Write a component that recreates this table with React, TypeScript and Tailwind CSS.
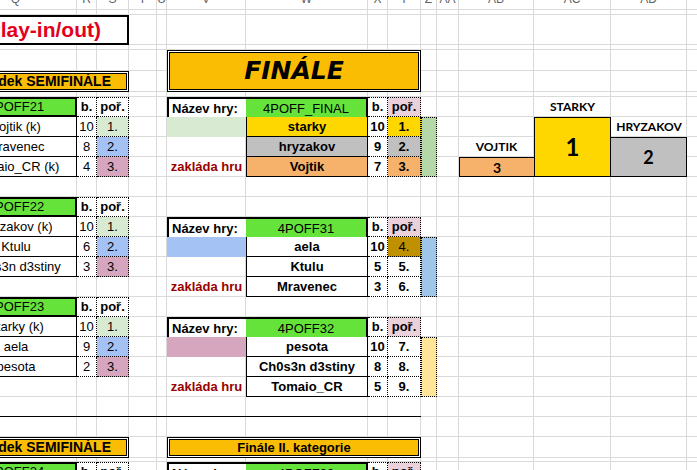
import { Fragment } from "react";

type LRow = { name: string; pts: string; rank: string; bg: string };
type RRow = { name: string; pts: string; rank: string; nameBg: string; rankBg: string; rankBold?: boolean };

const letters = ["Q", "R", "S", "T", "U", "V", "W", "X", "Y", "Z", "AA", "AB", "AC", "AD", "AE"];
const ROWS = 30;

function LeftTable({ pos, code, rows }: { pos: string; code: string; rows: LRow[] }) {
  return (
    <div className={`${pos} grid grid-cols-[122px_20px_32px] auto-rows-[20px]`}>
      <div className="flex items-center justify-center border-2 border-black bg-[#65e33b]">{code}</div>
      <div className="flex items-center justify-center border-y border-r border-dotted border-black bg-white font-bold">b.</div>
      <div className="flex items-center justify-center border-y border-r border-dotted border-black bg-white font-bold">poř.</div>
      {rows.map((r) => (
        <Fragment key={r.name}>
          <div className="flex items-center justify-center whitespace-nowrap border-x border-b border-black bg-white">{r.name}</div>
          <div className="flex items-center justify-center border-r border-b border-dotted border-black bg-white">{r.pts}</div>
          <div className={`flex items-center justify-center border-r border-b border-dotted border-black ${r.bg}`}>{r.rank}</div>
        </Fragment>
      ))}
    </div>
  );
}

function RightTable({
  pos,
  code,
  rows,
  first,
  bar,
}: {
  pos: string;
  code: string;
  rows: RRow[];
  first?: string;
  bar?: string;
}) {
  return (
    <div className={`${pos} grid grid-cols-[79px_122px_20px_33px_16px] auto-rows-[20px]`}>
      {bar && <div className={`col-start-5 row-start-2 row-span-3 border border-dotted border-black ${bar}`} />}
      <div className="col-span-2 grid grid-cols-[77px_1fr] border-2 border-black">
        <div className="flex items-center bg-white pl-[3px] font-bold">Název hry:</div>
        <div className="flex items-center justify-center bg-[#65e33b]">{code}</div>
      </div>
      <div className="flex items-center justify-center border-y border-r border-dotted border-black bg-white font-bold">b.</div>
      <div className="flex items-center justify-center border-y border-r border-dotted border-black bg-[#ead1dc] font-bold">poř.</div>
      <div />
      {rows.map((r, i) => (
        <Fragment key={r.name}>
          {i === 0 ? (
            <div className={first} />
          ) : i === 2 ? (
            <div className="flex items-center justify-center font-bold text-[#990000]">zakláda hru</div>
          ) : (
            <div />
          )}
          <div className={`flex items-center justify-center border-x border-b border-black font-bold ${r.nameBg}`}>{r.name}</div>
          <div className="flex items-center justify-center border-r border-b border-dotted border-black bg-white font-bold">{r.pts}</div>
          <div
            className={`flex items-center justify-center border-r border-b border-dotted border-black ${r.rankBg} ${
              r.rankBold === false ? "font-normal" : "font-bold"
            }`}
          >
            {r.rank}
          </div>
        </Fragment>
      ))}
    </div>
  );
}

function Banner({ pos, children, inner }: { pos: string; children: React.ReactNode; inner: string }) {
  return (
    <div className={`${pos} border border-black bg-white p-px`}>
      <div className={`flex h-full items-center whitespace-nowrap border border-black bg-[#fbbc04] ${inner}`}>{children}</div>
    </div>
  );
}

export default function App() {
  return (
    <div className="h-[470px] w-[697px] overflow-hidden bg-white font-['Liberation_Sans',Arial,sans-serif] text-[13px] text-black">
      <div className="-ml-[45px] grid w-max">
        {/* sheet gridlines */}
        <div className="[grid-area:1/1] grid grid-cols-[122px_20px_32px_28px_10px_79px_122px_20px_33px_16px_22px_75px_77px_76px_60px] grid-rows-[10px_5px_30px_5px_21px_21px_5px_repeat(17,20px)_21px_4px_repeat(4,20px)]">
          {Array.from({ length: ROWS * letters.length }).map((_, i) => (
            <div key={i} className="overflow-hidden border-r border-b border-[#dadada]">
              {i < letters.length && (
                <div className="-mt-[7px] text-center text-[12px] leading-[12px] text-[#5f6368]">{letters[i]}</div>
              )}
            </div>
          ))}
        </div>

        {/* content */}
        <div className="[grid-area:1/1] grid grid-cols-[122px_20px_32px_28px_10px_79px_122px_20px_33px_16px_22px_75px_77px_76px_60px] grid-rows-[10px_5px_30px_5px_21px_21px_5px_repeat(17,20px)_21px_4px_repeat(4,20px)]">
          <div className="col-start-1 col-span-3 row-start-3 flex items-center justify-end overflow-hidden whitespace-nowrap border-2 border-black bg-white pr-[26px] text-[21px] font-bold text-[#e3001b]">
            Play-off (Play-in/out)
          </div>

          <Banner pos="col-start-1 col-span-3 row-start-6" inner="justify-end pr-[15px] text-[14px] font-bold">
            1. řádek SEMIFINÁLE
          </Banner>

          <Banner pos="col-start-6 col-span-4 row-start-5 row-span-2" inner="justify-center">
            <span className="font-['DejaVu_Sans',sans-serif] text-[25px] font-bold italic">FINÁLE</span>
          </Banner>

          <LeftTable
            pos="col-start-1 col-span-3 row-start-8 row-span-4"
            code="4POFF21"
            rows={[
              { name: "Vojtik (k)", pts: "10", rank: "1.", bg: "bg-[#d9ead3]" },
              { name: "Mravenec", pts: "8", rank: "2.", bg: "bg-[#a4c2f4]" },
              { name: "Tomaio_CR (k)", pts: "4", rank: "3.", bg: "bg-[#d5a6bd]" },
            ]}
          />
          <LeftTable
            pos="col-start-1 col-span-3 row-start-13 row-span-4"
            code="4POFF22"
            rows={[
              { name: "Hryzakov (k)", pts: "10", rank: "1.", bg: "bg-[#d9ead3]" },
              { name: "Ktulu", pts: "6", rank: "2.", bg: "bg-[#a4c2f4]" },
              { name: "Ch0s3n d3stiny", pts: "3", rank: "3.", bg: "bg-[#d5a6bd]" },
            ]}
          />
          <LeftTable
            pos="col-start-1 col-span-3 row-start-18 row-span-4"
            code="4POFF23"
            rows={[
              { name: "Starky (k)", pts: "10", rank: "1.", bg: "bg-[#d9ead3]" },
              { name: "aela", pts: "9", rank: "2.", bg: "bg-[#a4c2f4]" },
              { name: "pesota", pts: "2", rank: "3.", bg: "bg-[#d5a6bd]" },
            ]}
          />

          <RightTable
            pos="col-start-6 col-span-5 row-start-8 row-span-4"
            code="4POFF_FINAL"
            first="bg-[#d9ead3]"
            bar="bg-[#b6d7a8]"
            rows={[
              { name: "starky", pts: "10", rank: "1.", nameBg: "bg-[#ffd700]", rankBg: "bg-[#ffd700]" },
              { name: "hryzakov", pts: "9", rank: "2.", nameBg: "bg-[#c0c0c0]", rankBg: "bg-[#c0c0c0]" },
              { name: "Vojtik", pts: "7", rank: "3.", nameBg: "bg-[#f6b26b]", rankBg: "bg-[#f6b26b]" },
            ]}
          />
          <RightTable
            pos="col-start-6 col-span-5 row-start-14 row-span-4"
            code="4POFF31"
            first="bg-[#a4c2f4]"
            bar="bg-[#9fc5e8]"
            rows={[
              { name: "aela", pts: "10", rank: "4.", nameBg: "bg-white", rankBg: "bg-[#bf9000]", rankBold: false },
              { name: "Ktulu", pts: "5", rank: "5.", nameBg: "bg-white", rankBg: "bg-white" },
              { name: "Mravenec", pts: "3", rank: "6.", nameBg: "bg-white", rankBg: "bg-white" },
            ]}
          />
          <RightTable
            pos="col-start-6 col-span-5 row-start-19 row-span-4"
            code="4POFF32"
            first="bg-[#d5a6bd]"
            bar="bg-[#ffe599]"
            rows={[
              { name: "pesota", pts: "10", rank: "7.", nameBg: "bg-white", rankBg: "bg-white" },
              { name: "Ch0s3n d3stiny", pts: "8", rank: "8.", nameBg: "bg-white", rankBg: "bg-white" },
              { name: "Tomaio_CR", pts: "5", rank: "9.", nameBg: "bg-white", rankBg: "bg-white" },
            ]}
          />

          {/* podium */}
          <div className="col-start-13 row-start-8 flex items-center justify-center font-['Lato',sans-serif] text-[12px] font-bold">STARKY</div>
          <div className="col-start-13 row-start-9 row-span-3 flex items-center justify-center border border-black bg-[#ffd700] font-['Lato',sans-serif] text-[24px] font-bold">
            1
          </div>
          <div className="col-start-14 row-start-9 flex items-center justify-center font-['Lato',sans-serif] text-[12px] font-bold">HRYZAKOV</div>
          <div className="col-start-14 row-start-10 row-span-2 flex items-center justify-center border-y border-r border-black bg-[#c0c0c0] font-['Lato',sans-serif] text-[18px] font-bold">
            2
          </div>
          <div className="col-start-12 row-start-10 flex items-center justify-center font-['Lato',sans-serif] text-[12px] font-bold">VOJTIK</div>
          <div className="col-start-12 row-start-11 flex items-center justify-center border-y border-l border-black bg-[#f6b26b] font-['Lato',sans-serif] text-[14px] font-bold">
            3
          </div>

          {/* lower section */}
          <div className="col-start-1 col-span-9 row-start-23 border-b border-black" />

          <Banner pos="col-start-1 col-span-3 row-start-25" inner="justify-end pr-[15px] text-[14px] font-bold">
            2. řádek SEMIFINÁLE
          </Banner>
          <Banner pos="col-start-6 col-span-4 row-start-25" inner="justify-center font-bold">
            Finále II. kategorie
          </Banner>

          <LeftTable pos="col-start-1 col-span-3 row-start-27 row-span-4" code="4POFF24" rows={[]} />
          <RightTable pos="col-start-6 col-span-5 row-start-27 row-span-4" code="4POFF33" rows={[]} />
        </div>
      </div>
    </div>
  );
}
